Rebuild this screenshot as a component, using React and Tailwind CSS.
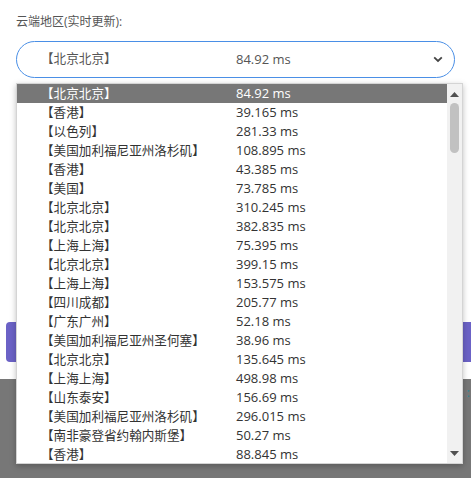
import React from "react";

const rows = [
  ["北京北京", "84.92"],
  ["香港", "39.165"],
  ["以色列", "281.33"],
  ["美国加利福尼亚州洛杉矶", "108.895"],
  ["香港", "43.385"],
  ["美国", "73.785"],
  ["北京北京", "310.245"],
  ["北京北京", "382.835"],
  ["上海上海", "75.395"],
  ["北京北京", "399.15"],
  ["上海上海", "153.575"],
  ["四川成都", "205.77"],
  ["广东广州", "52.18"],
  ["美国加利福尼亚州圣何塞", "38.96"],
  ["北京北京", "135.645"],
  ["上海上海", "498.98"],
  ["山东泰安", "156.69"],
  ["美国加利福尼亚州洛杉矶", "296.015"],
  ["南非豪登省约翰内斯堡", "50.27"],
  ["香港", "88.845"],
];

const font = { fontFamily: '"Open Sans", "Noto Sans CJK SC", sans-serif' };

export default function App() {
  return (
    <div
      className="relative w-[471px] h-[478px] overflow-hidden bg-white text-[#333]"
      style={font}
    >
      <div className="flex flex-col h-full">
        <div className="px-4 pt-[13px] text-[12px] leading-[18px] text-[#555]">
          云端地区(实时更新):
        </div>
        <div className="mx-4 mt-[10px] h-[37px] rounded-full border border-[#4a8fe6] flex items-center pl-[24px] pr-[10px] text-[13px] text-[#555]">
          <span className="w-[195px] text-[12.6px]">【北京北京】</span>
          <span className="flex-1">84.92 ms</span>
          <svg width="10" height="7" viewBox="0 0 10 7" className="mr-[1px]">
            <path d="M1.2 1.4 L5 5 L8.8 1.4" fill="none" stroke="#444" strokeWidth="1.8" />
          </svg>
        </div>
        <div className="h-[244px]" />
        <div className="ml-[6px] h-[40px] rounded-l-[4px] bg-[#6b62c6]" />
        <div className="h-[17px]" />
        <div className="flex-1 bg-[#777777] flex justify-end pt-[8px] pr-[1px]">
          <span className="text-[12px] text-[#2a8a9a] leading-none">:</span>
        </div>
      </div>

      <div className="absolute left-4 top-[83px] w-[447px] h-[381px] bg-white border border-[#d4d4d4] shadow-[0_2px_6px_rgba(0,0,0,0.25)] flex">
        <div className="flex-1 flex flex-col">
          {rows.map(([name, ms], i) => (
            <div
              key={i}
              className={
                "h-[19px] flex items-center pl-[24px] text-[13px] leading-[19px] " +
                (i === 0 ? "bg-[#777777] text-white" : "text-[#333]")
              }
            >
              <span className="w-[195px] whitespace-nowrap text-[12.6px]">【{name}】</span>
              <span className="whitespace-nowrap">{ms} ms</span>
            </div>
          ))}
        </div>
        <div className="w-[15px] bg-[#f1f1f1] flex flex-col items-center">
          <svg width="9" height="5" viewBox="0 0 9 5" className="mt-[8px]">
            <path d="M0 5 L4.5 0 L9 5 Z" fill="#505050" />
          </svg>
          <div className="mt-[6px] w-[9px] h-[50px] rounded-full bg-[#c1c1c1]" />
          <div className="flex-1" />
          <svg width="9" height="5" viewBox="0 0 9 5" className="mb-[7px]">
            <path d="M0 0 L9 0 L4.5 5 Z" fill="#505050" />
          </svg>
        </div>
      </div>
    </div>
  );
}
